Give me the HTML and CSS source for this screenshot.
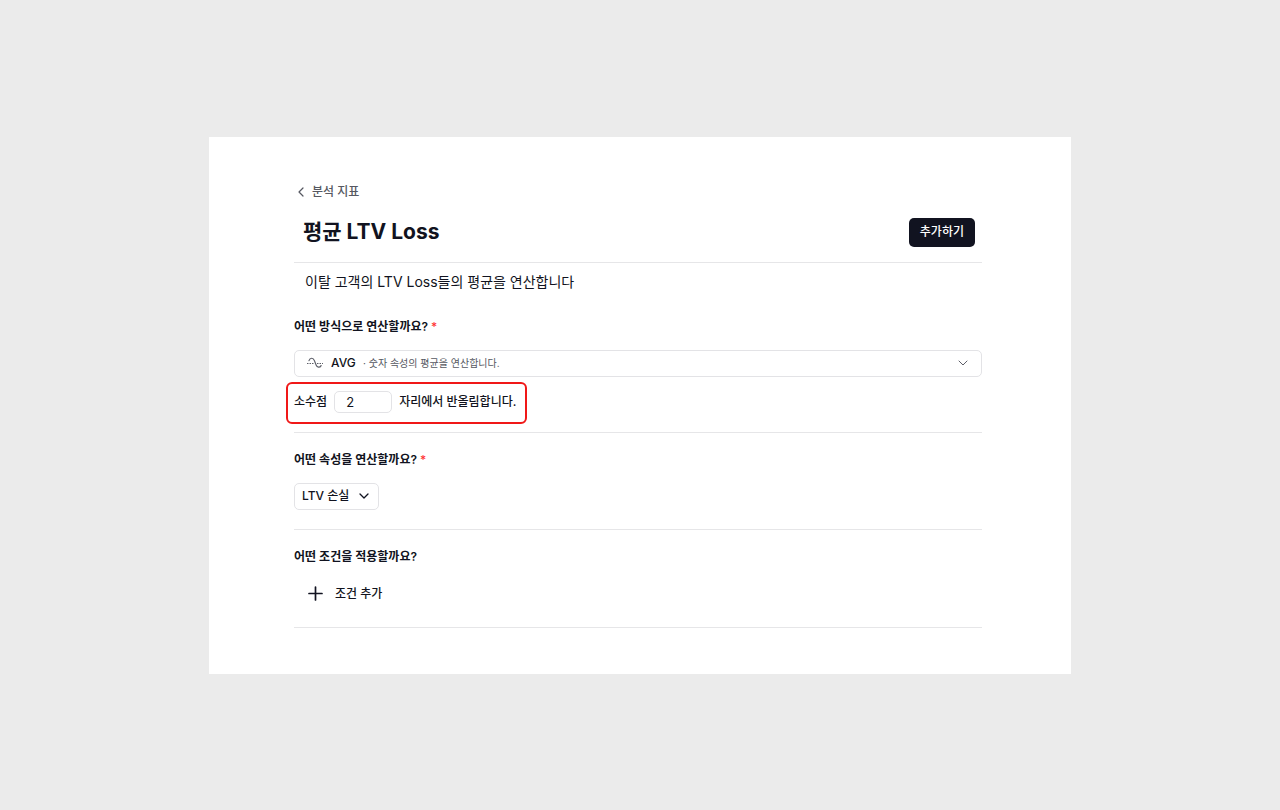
FILE: index.html
```html
<!DOCTYPE html>
<html lang="ko">
<head>
<meta charset="utf-8">
<meta name="viewport" content="width=device-width, initial-scale=1">
<title>평균 LTV Loss</title>
<link rel="stylesheet" href="styles.css">
</head>
<body>
<main class="card">
  <a class="back" href="#">
    <svg width="6" height="10" viewBox="0 0 6 10" fill="none" stroke="currentColor" stroke-width="1.2" stroke-linecap="round" stroke-linejoin="round" aria-hidden="true"><path d="M5 1 1 5l4 4"/></svg>
    분석 지표
  </a>
  <header class="header">
    <h1 class="title">평균 LTV Loss</h1>
    <button class="submit" type="button">추가하기</button>
  </header>
  <p class="description">이탈 고객의 LTV Loss들의 평균을 연산합니다</p>

  <section class="section section-method">
    <label class="question" for="method">어떤 방식으로 연산할까요? <span class="required">*</span></label>
    <div class="method">
      <select class="method-select" id="method" aria-describedby="method-note"><option>AVG</option></select>
      <svg class="method-icon" width="16" height="12" viewBox="0 0 16 12" fill="none" stroke="currentColor" stroke-linecap="round" aria-hidden="true"><path stroke-width="1.2" d="M2 3.600C3 .6 6.200 .4 7.400 3.600l1.700 4.400c1 2.700 3.800 2.800 5 .6"/><path d="M0 6.500H7M10 6.500H16" stroke-dasharray="1.500 1" stroke-linecap="butt"/></svg>
      <span class="method-note" id="method-note">· 숫자 속성의 평균을 연산합니다.</span>
      <svg class="method-arrow" width="10" height="6" viewBox="0 0 10 6" fill="none" stroke="currentColor" stroke-linecap="round" stroke-linejoin="round" aria-hidden="true"><path d="m1 1 4 4 4-4"/></svg>
    </div>
    <div class="rounding">
      <label for="digits">소수점</label>
      <input class="digits" id="digits" type="text" inputmode="numeric" value="2">
      <span>자리에서 반올림합니다.</span>
    </div>
  </section>

  <section class="section">
    <label class="question" for="property">어떤 속성을 연산할까요? <span class="required">*</span></label>
    <div class="property">
      <select class="property-select" id="property"><option>LTV 손실</option></select>
      <svg class="property-arrow" width="10" height="6" viewBox="0 0 10 6" fill="none" stroke="currentColor" stroke-width="1.3" stroke-linecap="round" stroke-linejoin="round" aria-hidden="true"><path d="m1 1 4 4 4-4"/></svg>
    </div>
  </section>

  <section class="section">
    <h2 class="question">어떤 조건을 적용할까요?</h2>
    <button class="add" type="button">
      <svg width="15" height="15" viewBox="0 0 15 15" fill="none" stroke="currentColor" stroke-width="1.7" stroke-linecap="round" aria-hidden="true"><path d="M7.5 1v13M1 7.5h13"/></svg>
      조건 추가
    </button>
  </section>
</main>
</body>
</html>
```
FILE: styles.css
```css
* {
  box-sizing: border-box;
}

body {
  margin: 0;
  min-height: 100vh;
  display: flex;
  align-items: center;
  justify-content: center;
  background: #ebebeb;
  color: #111320;
  font: 500 12px/20px Inter, "Noto Sans CJK KR", sans-serif;
}

button,
input,
select {
  font: inherit;
  color: inherit;
}

.card {
  width: 100%;
  max-width: 862px;
  padding: 45px 89px 46px 85px;
  background: #fff;
}

.back {
  display: inline-flex;
  align-items: center;
  gap: 8px;
  padding-left: 4px;
  color: #565861;
  text-decoration: none;
}

.header {
  display: flex;
  align-items: center;
  justify-content: space-between;
  padding: 15px 7px 15px 9px;
  border-bottom: 1px solid #e6e6e8;
}

.title {
  margin: 0;
  font-size: 21px;
  line-height: 28px;
  font-weight: 700;
}

.submit {
  height: 29px;
  padding: 0 11px;
  border: 0;
  border-radius: 5px;
  background: #111320;
  color: #fff;
}

.description {
  margin: 9px 11px 8px;
  font-size: 14px;
  line-height: 20px;
  font-weight: 400;
}

.section {
  padding: 17px 0 19px;
  border-bottom: 1px solid #e6e6e8;
}

.section-method {
  padding-bottom: 8px;
}

.question {
  display: block;
  margin: 0 0 13px;
  font-size: 12px;
  line-height: 20px;
  font-weight: 600;
}

.required {
  color: #ff3535;
  font-weight: 500;
}

.method,
.property {
  position: relative;
  display: flex;
  align-items: center;
}

.method-select,
.property-select {
  height: 27px;
  border: 1px solid #e3e3e6;
  border-radius: 5px;
  background: #fff;
  appearance: none;
}

.method-select {
  width: 100%;
  padding: 0 36px;
}

.method-icon,
.method-note,
.method-arrow,
.property-arrow {
  position: absolute;
  pointer-events: none;
}

.method-icon {
  left: 13px;
  color: #5d5f68;
}

.method-note {
  left: 69px;
  color: #565861;
  font-size: 10px;
  font-weight: 400;
}

.method-arrow {
  right: 14px;
  color: #5d5f68;
}

.rounding {
  display: inline-flex;
  align-items: center;
  gap: 7px;
  margin: 5px 0 0 -8px;
  padding: 7px 9px 9px 6px;
  border: 2px solid #f01818;
  border-radius: 6px;
}

.digits {
  width: 58px;
  height: 22px;
  padding: 0 11px;
  border: 1px solid #e3e3e6;
  border-radius: 5px;
  background: #fff;
  font-size: 13px;
  font-weight: 400;
}

.property {
  width: fit-content;
}

.property-select {
  padding: 0 28px 0 7px;
}

.property-arrow {
  right: 10px;
}

.add {
  display: flex;
  align-items: center;
  gap: 12px;
  padding: 4px 14px;
  border: 0;
  background: none;
}
```
